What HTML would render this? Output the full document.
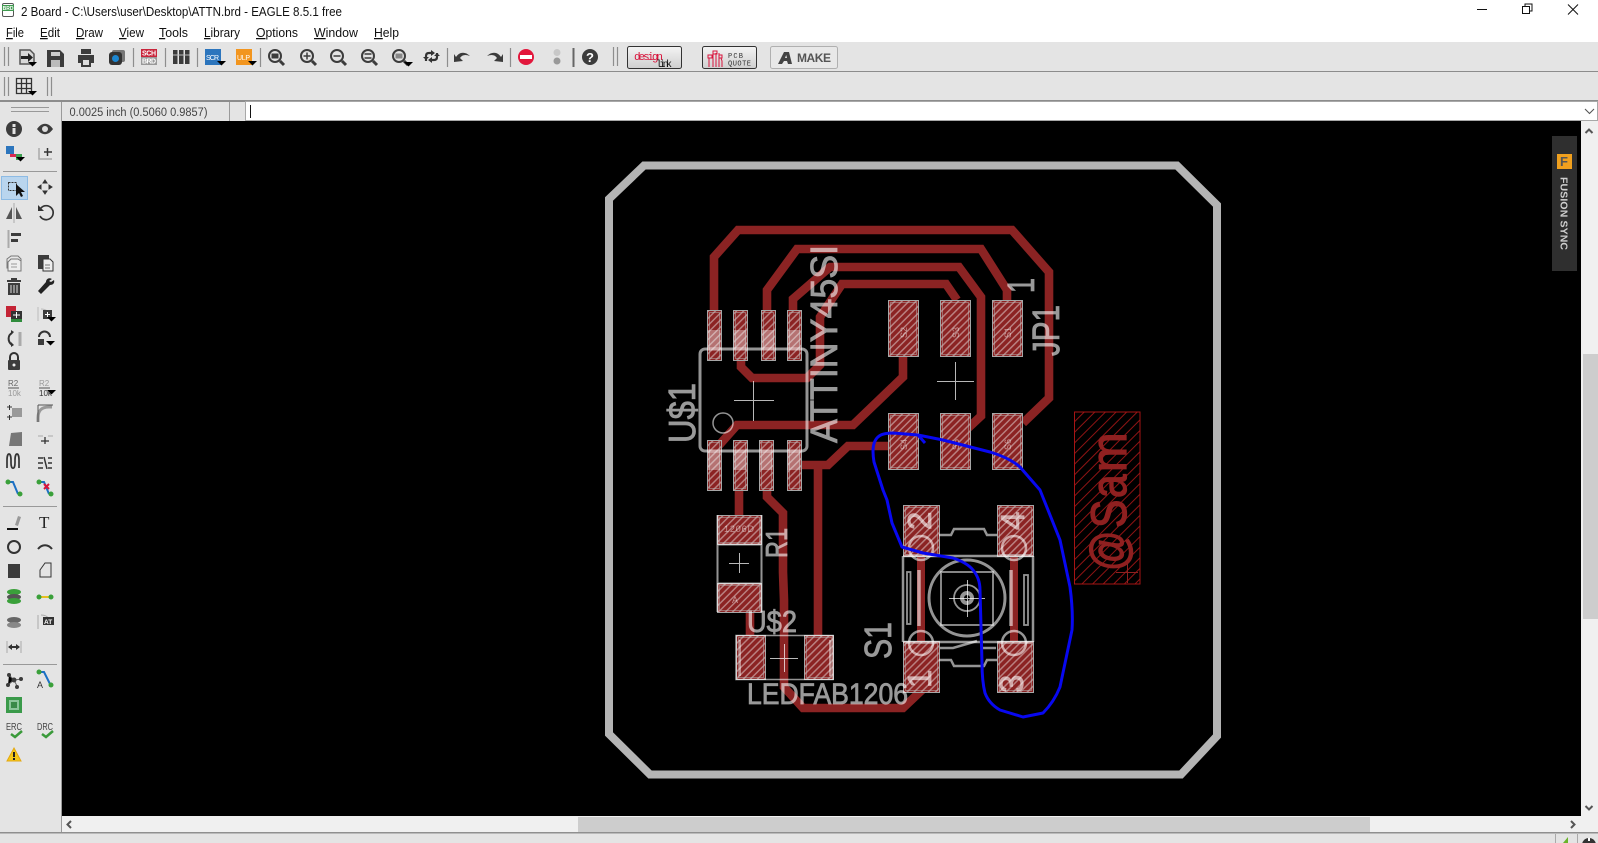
<!DOCTYPE html>
<html><head><meta charset="utf-8"><title>2 Board - EAGLE</title>
<style>
html,body{margin:0;padding:0;background:#e4e4e4;overflow:hidden}
svg{display:block;font-family:"Liberation Sans",sans-serif}
.m{font-size:12.5px;fill:#111}
.sk{fill:#fff;stroke:#fff;stroke-width:.8px;opacity:.6;font-size:38px}
.ic{fill:#3c3c3c}
.is{fill:none;stroke:#3c3c3c;stroke-width:2}
.sep{stroke:#8e8e8e;stroke-width:1.2}
</style></head><body>
<svg width="1598" height="843" viewBox="0 0 1598 843" xmlns="http://www.w3.org/2000/svg">
<defs>
<pattern id="h" width="5" height="5" patternUnits="userSpaceOnUse" patternTransform="rotate(45)"><rect width="5" height="5" fill="#8b2323"/><rect width="1.5" height="5" fill="#b98080"/></pattern>
<pattern id="hr" width="7.5" height="7.5" patternUnits="userSpaceOnUse" patternTransform="rotate(45)"><rect width="1" height="7.5" fill="#8f1414"/></pattern>
<g id="arr"><path d="M0 0h9l-4.500 4.500z" fill="#000"/></g>
<linearGradient id="g" x1="0" y1="0" x2="0" y2="1"><stop offset="0" stop-color="#f4f4f4"/><stop offset="1" stop-color="#cfcfcf"/></linearGradient>
</defs>

<!-- chrome -->
<rect width="1598" height="843" fill="#e4e4e4"/>
<rect width="1598" height="42" fill="#fff"/>
<rect y="71" width="1598" height="1" fill="#8c8c8c"/>
<rect y="100" width="1598" height="2" fill="#8c8c8c"/>

<!-- title -->
<g>
<rect x="2.500" y="3.500" width="11" height="13" rx="1.500" fill="#fff" stroke="#555"/>
<rect x="2" y="5" width="12" height="6" fill="#3f9c50"/>
<text x="2.600" y="10" font-size="5" fill="#fff" font-weight="bold">BRD</text>
</g>
<text x="21" y="16" font-size="12.500" fill="#111" textLength="321" lengthAdjust="spacingAndGlyphs">2 Board - C:\Users\user\Desktop\ATTN.brd - EAGLE 8.5.1 free</text>
<path d="M1477 9.500h10" stroke="#111" stroke-width="1"/>
<path d="M1522.500 6.500h7v7h-7zM1525 6.500v-2.500h7v7h-2.500" fill="none" stroke="#111"/>
<path d="M1568 4.500l10 10M1578 4.500l-10 10" stroke="#111" stroke-width="1"/>

<!-- menu -->
<text class="m" x="6" y="37" textLength="18" lengthAdjust="spacingAndGlyphs"><tspan text-decoration="underline">F</tspan>ile</text>
<text class="m" x="40" y="37" textLength="20" lengthAdjust="spacingAndGlyphs"><tspan text-decoration="underline">E</tspan>dit</text>
<text class="m" x="76" y="37" textLength="27" lengthAdjust="spacingAndGlyphs"><tspan text-decoration="underline">D</tspan>raw</text>
<text class="m" x="119" y="37" textLength="25" lengthAdjust="spacingAndGlyphs"><tspan text-decoration="underline">V</tspan>iew</text>
<text class="m" x="159" y="37" textLength="29" lengthAdjust="spacingAndGlyphs"><tspan text-decoration="underline">T</tspan>ools</text>
<text class="m" x="204" y="37" textLength="36" lengthAdjust="spacingAndGlyphs"><tspan text-decoration="underline">L</tspan>ibrary</text>
<text class="m" x="256" y="37" textLength="42" lengthAdjust="spacingAndGlyphs"><tspan text-decoration="underline">O</tspan>ptions</text>
<text class="m" x="314" y="37" textLength="44" lengthAdjust="spacingAndGlyphs"><tspan text-decoration="underline">W</tspan>indow</text>
<text class="m" x="374" y="37" textLength="25" lengthAdjust="spacingAndGlyphs"><tspan text-decoration="underline">H</tspan>elp</text>

<!-- toolbar 1 -->
<path class="sep" d="M4.500 47v19M8.500 47v19M133.500 48v19M165.500 48v19M197.500 48v19M260.500 48v19M447.500 48v19M510.500 48v19M613.500 47v19M617.500 47v19"/>
<path d="M573.500 48v19" stroke="#666" stroke-width="2"/>
<path d="M20 50h10l4 4v10h-14z" fill="#d8d8d8" stroke="#555" stroke-width="1.500"/><path d="M21 56h7v-3l5 4.500-5 4.500v-3h-7z" fill="#222"/><use href="#arr" x="28" y="62"/>
<path d="M47 50h13l4 4v13h-17z" class="ic"/><rect x="51" y="52" width="9" height="4" fill="#ccc"/><rect x="51" y="60" width="9" height="7" fill="#bbb"/>
<path d="M81 49h10v5h-10zM78 55h16v8h-3v4h-10v-4h-3z" class="ic"/><rect x="83" y="60" width="6" height="5" fill="#ddd"/>
<rect x="112" y="50" width="13" height="12" rx="2" fill="#777"/><rect x="109" y="52" width="13" height="13" rx="3" fill="#333"/><circle cx="115.500" cy="58.500" r="3.500" fill="#1c86d0"/>
<rect x="141" y="49" width="16" height="8" fill="#c8263c"/><rect x="141" y="57" width="16" height="8" fill="#999"/><text x="142" y="55.500" font-size="7" font-weight="bold" fill="#fff" textLength="14">SCH</text><text x="142" y="63.500" font-size="7" font-weight="bold" fill="#fff" textLength="14">BRD</text>
<rect x="173" y="50" width="4.500" height="14" class="ic"/><rect x="179" y="50" width="4.500" height="14" class="ic"/><rect x="185" y="50" width="4.500" height="14" class="ic"/><path d="M173 55h16.500" stroke="#bbb"/>
<rect x="205" y="49" width="16" height="16" fill="#2c75bd"/><text x="206" y="60" font-size="7" fill="#fff" textLength="13">SCR</text><use href="#arr" x="217" y="61"/>
<rect x="236" y="49" width="16" height="16" fill="#f2951e"/><text x="237" y="60" font-size="7" fill="#fff" textLength="13">ULP</text><use href="#arr" x="248" y="61"/>
<g class="is"><circle cx="275" cy="56" r="6"/><path d="M280 61l4 4" stroke-width="3"/><circle cx="307" cy="56" r="6"/><path d="M312 61l4 4" stroke-width="3"/><circle cx="337" cy="56" r="6"/><path d="M342 61l4 4" stroke-width="3"/><circle cx="368" cy="56" r="6"/><path d="M373 61l4 4" stroke-width="3"/><circle cx="399" cy="56" r="6"/><path d="M404 61l4 4" stroke-width="3"/></g>
<rect x="271.500" y="53.500" width="7" height="5" class="ic"/><path d="M303.500 56h7M307 52.500v7M333.500 56h7M364.500 54h7M364.500 58h7" stroke="#3c3c3c" stroke-width="1.500"/><rect x="395.500" y="53.500" width="7" height="5" fill="#888"/><use href="#arr" x="404" y="62"/>
<path d="M426 61v-5c0-2 1-3 3-3h3M437 53v4c0 2-1 3-3 3h-3" fill="none" stroke="#333" stroke-width="2.200"/><path d="M431 50v6l4-3zM432 57v6l-4-3zM423 57h6l-3 3zM434 56h6l-3-3z" fill="#333"/>
<path d="M456 57c3-5 9-6 14-1-5-2-8-1-10 2l3 3-9 1 0-8z" class="ic"/>
<path d="M501 57c-3-5-9-6-14-1 5-2 8-1 10 2l-3 3 9 1 0-8z" class="ic"/>
<circle cx="526" cy="57" r="8" fill="#e2173c"/><rect x="520" y="55" width="12" height="4" fill="#fff"/>
<circle cx="557" cy="52.500" r="3.500" fill="#c8c8c8"/><circle cx="557" cy="61" r="3.500" fill="#999"/>
<circle cx="590" cy="57" r="8" fill="#3c3c3c"/><text x="586" y="62" font-size="13" font-weight="bold" fill="#fff">?</text>

<!-- buttons -->
<rect x="627.500" y="46.500" width="54" height="22" rx="2" fill="url(#g)" stroke="#333"/>
<text x="634" y="60" font-size="11" fill="#d8143c" font-family="Liberation Mono" textLength="29">design</text>
<text x="656" y="67" font-size="10" fill="#111" font-family="Liberation Mono" textLength="16">link</text>
<rect x="702.500" y="46.500" width="54" height="22" rx="2" fill="url(#g)" stroke="#333"/>
<path d="M709 67v-9M713 67v-14M716 67v-14M719 67v-14M722 67v-6l-1-3M708 55h4v3h-4zM713 51h4v3h-4zM719 55h3v3h-3z" fill="none" stroke="#d8143c"/>
<text x="728" y="58" font-size="7" fill="#333" font-family="Liberation Mono" textLength="15">PCB</text>
<text x="728" y="65.500" font-size="7" fill="#333" font-family="Liberation Mono" textLength="23">QUOTE</text>
<rect x="770.500" y="46.500" width="67" height="22" rx="2" fill="#e8e8e8" stroke="#b0b0b0"/>
<path d="M778 64l6-12h5l3 12h-4l-1-3h-3l-2 3zM785 58h2l-.8-3z" fill="#444"/>
<text x="797" y="62" font-size="12" font-weight="bold" fill="#555" textLength="34">MAKE</text>

<!-- toolbar 2 -->
<path class="sep" d="M4.500 77v19M8.500 77v19M47.500 77v19M51.500 77v19"/>
<path d="M16.500 78.500h15v15h-15zM16.500 83.500h15M16.500 88.500h15M21.500 78.500v15M26.500 78.500v15" fill="none" stroke="#333" stroke-width="1.300"/><use href="#arr" x="28" y="91"/>

<!-- coord row -->
<rect x="0" y="102" width="62" height="19" fill="#e4e4e4"/>
<path d="M61.500 102v19M229.500 102v19" stroke="#9a9a9a"/>
<text x="69.500" y="116" font-size="11.500" fill="#444" textLength="138" lengthAdjust="spacingAndGlyphs">0.0025 inch (0.5060 0.9857)</text>
<rect x="245.500" y="101.500" width="1352" height="19" fill="#fff" stroke="#a8a8a8"/>
<path d="M250.500 105v13" stroke="#111"/>
<path d="M1585 109l4.500 4.500 4.500-4.500" fill="none" stroke="#555" stroke-width="1.100"/>

<!-- canvas -->
<rect x="62" y="121" width="1519" height="695" fill="#000"/>
<rect x="61" y="102" width="1" height="731" fill="#9a9a9a"/>
<!-- v scroll -->
<rect x="1581" y="121" width="17" height="712" fill="#f0f0f0"/>
<rect x="1583" y="354" width="15" height="265" fill="#cdcdcd"/>
<path d="M1585.500 133l3.500-3.500 3.500 3.500" fill="none" stroke="#555" stroke-width="2"/>
<path d="M1585.500 806l3.500 3.500 3.500-3.500" fill="none" stroke="#555" stroke-width="2"/>
<!-- h scroll -->
<rect x="62" y="816" width="1519" height="16" fill="#f0f0f0"/>
<rect x="578" y="817" width="792" height="15" fill="#cdcdcd"/>
<path d="M71 821l-3.500 3.500 3.500 3.500" fill="none" stroke="#555" stroke-width="2"/>
<path d="M1571 821l3.500 3.500-3.500 3.500" fill="none" stroke="#555" stroke-width="2"/>
<rect y="832" width="1598" height="1.500" fill="#8f8f8f"/>
<!-- status -->
<text x="8" y="852" font-size="12" fill="#222" textLength="470" lengthAdjust="spacing">Left-click &amp; drag to define group (followed by Ctrl+right-click to move group)</text>
<path d="M1555.500 834v9M1577.500 834v9" stroke="#aaa"/>
<path d="M1563 843l5-6v6z" fill="#6ab42a"/><circle cx="1589" cy="845" r="7" fill="#333"/><rect x="1588" y="838" width="2" height="3" fill="#fff"/>

<!-- Fusion Sync -->
<rect x="1552" y="136" width="25" height="135" fill="#2f2f2f"/>
<rect x="1557" y="154" width="15" height="15" fill="#f0a01e"/>
<text x="1560" y="166" font-size="13" font-weight="bold" fill="#555">F</text>
<text transform="translate(1560.500,177) rotate(90)" font-size="10.500" font-weight="bold" fill="#cfcfcf" textLength="73">FUSION SYNC</text>

<!-- PCB -->
<path d="M644 165.500H1177L1217 205V736L1181 774.500H650L609 734V199Z" fill="none" stroke="#b4b4b4" stroke-width="8"/>

<g fill="none" stroke="#8b2323" stroke-width="8.600">
<path d="M714 320V257L738 230H1012L1049 272V398L1023 423"/>
<path d="M767 320V290L797 249H981L1007 290V305"/>
<path d="M793 320V299L830 267H959L981 297V416L965 431"/>
<path d="M741 350V367L752 378H807L820 365V317L842 284H946L957 300"/>
<path d="M713 452L737 425H853L903 377V350"/>
<path d="M795 465H828L848 446H895"/>
<path d="M818 465V640"/>
<path d="M739 485V520"/>
<path d="M767 485V497L783 513V572L784 600V687L803 708H903L922 690"/>
<path d="M750 605V640"/>
<path d="M921 550V645M1014 550V645" stroke-width="8"/>
</g>

<!-- pads -->
<g fill="url(#h)" stroke="#a6a6a6" stroke-width="1">
<rect x="707.500" y="310.500" width="14" height="50"/><rect x="733.500" y="310.500" width="14" height="50"/><rect x="761.500" y="310.500" width="14" height="50"/><rect x="787.500" y="310.500" width="14" height="50"/>
<rect x="707.500" y="440.500" width="14" height="50"/><rect x="733.500" y="440.500" width="14" height="50"/><rect x="759.500" y="440.500" width="14" height="50"/><rect x="787.500" y="440.500" width="14" height="50"/>
<rect x="888.500" y="300.500" width="30" height="56"/><rect x="940.500" y="300.500" width="30" height="56"/><rect x="992.500" y="300.500" width="30" height="56"/>
<rect x="888.500" y="413.500" width="30" height="56"/><rect x="940.500" y="413.500" width="30" height="56"/><rect x="992.500" y="413.500" width="30" height="56"/>
<rect x="717.500" y="515.500" width="44" height="29"/><rect x="717.500" y="583.500" width="44" height="29"/>
<rect x="736.500" y="635.500" width="29" height="44"/><rect x="804.500" y="635.500" width="29" height="44"/>
<rect x="903.500" y="505.500" width="36" height="51"/><rect x="997.500" y="505.500" width="36" height="51"/>
<rect x="903.500" y="641.500" width="36" height="51"/><rect x="997.500" y="641.500" width="36" height="51"/>
</g>
<g fill="none" stroke="#b5b5b5" stroke-width="1" opacity=".5">
<rect x="709.500" y="312.500" width="10" height="46"/><rect x="735.500" y="312.500" width="10" height="46"/><rect x="763.500" y="312.500" width="10" height="46"/><rect x="789.500" y="312.500" width="10" height="46"/>
<rect x="709.500" y="442.500" width="10" height="46"/><rect x="735.500" y="442.500" width="10" height="46"/><rect x="761.500" y="442.500" width="10" height="46"/><rect x="789.500" y="442.500" width="10" height="46"/>
<rect x="890.500" y="302.500" width="26" height="52"/><rect x="942.500" y="302.500" width="26" height="52"/><rect x="994.500" y="302.500" width="26" height="52"/>
<rect x="890.500" y="415.500" width="26" height="52"/><rect x="942.500" y="415.500" width="26" height="52"/><rect x="994.500" y="415.500" width="26" height="52"/>
<rect x="719.500" y="517.500" width="40" height="25"/><rect x="719.500" y="585.500" width="40" height="25"/>
<rect x="738.500" y="637.500" width="25" height="40"/><rect x="806.500" y="637.500" width="25" height="40"/>
<rect x="905.500" y="507.500" width="32" height="47"/><rect x="999.500" y="507.500" width="32" height="47"/>
<rect x="905.500" y="643.500" width="32" height="47"/><rect x="999.500" y="643.500" width="32" height="47"/>
</g>

<!-- silk -->
<g fill="none" stroke="rgba(255,255,255,.58)">
<rect x="700" y="349" width="107" height="102" rx="5" stroke-width="3"/>
<circle cx="723" cy="423" r="10" stroke-width="1.500"/>
<path d="M714 330v18M740 330v18M768 330v18M794 330v18M714 452v18M740 452v18M766 452v18M794 452v18" stroke-width="13" stroke="rgba(255,255,255,.36)"/>
<path d="M717.500 544.500h44v39h-44zM717.500 515v97M761.500 515v97" stroke-width="2"/>
<path d="M736 635.500h97v44h-97zM740 640v36M830 640v36" stroke-width="1.600"/>
<path d="M903 556v86M1033 556v86M903 556h130M903 642h130" stroke-width="2.500"/>
<path d="M939 535h12l3-6h30l3 6h10M939 660h12l3 6h30l3-6h10" stroke-width="2.500"/>
<path d="M940 648h13l24-7M982 648h14" stroke-width="2.500"/>
<circle cx="967" cy="598" r="38" stroke-width="3"/>
<rect x="941" y="572" width="52" height="53" stroke-width="1.800"/>
<circle cx="967" cy="598" r="13" stroke-width="1.800"/>
<circle cx="967" cy="598" r="5" stroke-width="4"/>
<rect x="907" y="572" width="3.500" height="52" stroke-width="1.800"/>
<rect x="1024" y="575" width="4" height="50" stroke-width="1.800"/>
<path d="M919 570v56M1011 570v56" stroke-width="3.500"/>
<circle cx="921" cy="548" r="12" stroke-width="2.500"/><circle cx="1014" cy="548" r="12" stroke-width="2.500"/>
<circle cx="921" cy="643" r="12" stroke-width="2.500"/><circle cx="1014" cy="643" r="12" stroke-width="2.500"/>
</g>
<g stroke="rgba(255,255,255,.72)" stroke-width="1" fill="none">
<path d="M734 400.500h40M753.500 381v40M937 381.500h37M955.500 362v38M729 563.500h20M739.500 553v20M770 658.500h28M784.500 644v28M949 598.500h36M967.500 580v37"/>
</g>

<!-- labels -->
<text class="sk" transform="translate(837,443) rotate(-90)" textLength="198" lengthAdjust="spacingAndGlyphs">ATTINY45SI</text>
<text class="sk" transform="translate(695,443) rotate(-90)" textLength="60" lengthAdjust="spacingAndGlyphs">U$1</text>
<text class="sk" transform="translate(1059,356) rotate(-90)" textLength="51" lengthAdjust="spacingAndGlyphs">JP1</text>
<text class="sk" transform="translate(1034,293) rotate(-90)" textLength="15" lengthAdjust="spacingAndGlyphs">1</text>
<text class="sk" style="font-size:31px" transform="translate(787,558) rotate(-90)" textLength="30" lengthAdjust="spacingAndGlyphs">R1</text>
<text class="sk" transform="translate(891,659) rotate(-90)" textLength="37" lengthAdjust="spacingAndGlyphs">S1</text>
<text class="sk" style="font-size:31px" x="747" y="632" textLength="50" lengthAdjust="spacingAndGlyphs">U$2</text>
<text class="sk" style="font-size:30px" x="747" y="704" textLength="161" lengthAdjust="spacingAndGlyphs">LEDFAB1206</text>
<text class="sk" style="font-size:33px" transform="translate(931,530) rotate(-90)">2</text>
<text class="sk" style="font-size:33px" transform="translate(1024,530) rotate(-90)">4</text>
<text class="sk" style="font-size:33px" transform="translate(931,688) rotate(-90)">1</text>
<text class="sk" style="font-size:33px" transform="translate(1023,693) rotate(-90)">3</text>
<g font-size="9" fill="rgba(255,255,255,.5)">
<text transform="translate(907,338) rotate(-90)">S2</text><text transform="translate(959,338) rotate(-90)">S3</text><text transform="translate(1011,338) rotate(-90)">S1</text>
<text transform="translate(907,450) rotate(-90)">S4</text><text transform="translate(959,450) rotate(-90)">S5</text><text transform="translate(1011,450) rotate(-90)">S6</text>
<text x="724" y="532" textLength="30">1206D</text><text x="732" y="603">A</text>
</g>

<!-- @Sam -->
<rect x="1074.500" y="412" width="65.500" height="172" fill="url(#hr)" stroke="#a51414" stroke-width="1"/>
<g font-size="50" fill="#8f2020" stroke="#8f2020" stroke-width="1.300">
<text transform="translate(1126,571) rotate(-90) scale(.8,1)">@</text>
<text transform="translate(1126,528) rotate(-90) scale(.85,1)">S</text>
<text transform="translate(1126,498) rotate(-90) scale(.85,1)">a</text>
<text transform="translate(1126,472) rotate(-90) scale(.95,1)">m</text>
</g>
<path d="M1116 572.500h22M1127.500 562v21" stroke="#8f2020" stroke-width="1"/>

<!-- blue scribble -->
<path d="M925 443L918 435L893 433C883 433 878 435 875 441C872 447 873 456 874 462L883 490L887 500L892 523L902 547L923 553L953 558C962 561 969 565 973 570C978 576 980 583 980 590L982 663C982 675 983 685 985 693C988 701 993 706 1000 710L1023 717L1043 713C1050 706 1056 697 1060 687L1072 630C1073 615 1072 602 1070 587L1060 540L1040 490L1020 467C1012 460 1000 455 990 452L943 440L918 435" fill="none" stroke="#0808f0" stroke-width="3" stroke-linejoin="round"/>

<!-- sidebar -->
<path d="M11 107.500h38M11 111.500h38" stroke="#999"/>
<path d="M3 171.500h54M3 506.500h54M3 664.500h54" stroke="#999"/>
<rect x="1.500" y="176.500" width="26" height="23" fill="#b9d5ee" stroke="#8dbbe4"/>

<circle cx="14" cy="129" r="8" class="ic"/><rect x="12.500" y="124" width="3" height="3" fill="#e4e4e4"/><rect x="12.500" y="128" width="3" height="6" fill="#e4e4e4"/>
<path d="M37 129c5-7 11-7 16 0-5 7-11 7-16 0z" class="ic"/><circle cx="45" cy="129" r="3" fill="#ddd"/>
<rect x="6" y="146" width="8" height="8" fill="#2c75bd"/><rect x="10" y="154" width="8" height="3" fill="#d82a50"/><rect x="16" y="154" width="6" height="6" fill="#3ca050"/><use href="#arr" x="16" y="157"/>
<path d="M39 148v11h13" stroke="#aaa" stroke-width="1.500" fill="none"/><path d="M44 152h8M47.500 148v8" stroke="#333" stroke-width="1.500"/>
<rect x="8.500" y="182.500" width="8" height="8" fill="none" stroke="#333" stroke-dasharray="2 1"/><path d="M16 184l0 12 3-3 2 4 2-1-2-4 4 0z" fill="#111"/>
<path d="M45 180l2 3h-4zM45 194l2-3h-4zM38 187l3-2v4zM52 187l-3-2v4z" stroke="#333" fill="#333"/>
<path d="M12 207v12l-6 0zM16 207v12l6 0z" fill="#555"/><path d="M14 203v20" stroke="#aaa"/>
<path d="M41 208a7 7 0 1 1-1 8" fill="none" stroke="#333" stroke-width="1.700"/><path d="M38 205v6h6z" fill="#333"/>
<path d="M8.500 230v18" stroke="#aaa" stroke-width="2"/><rect x="11" y="233" width="10" height="3" class="ic"/><rect x="11" y="239" width="7" height="3" class="ic"/>
<path d="M11 256h7l3 3v9h-14v-9z" fill="#e8e8e8" stroke="#777"/><path d="M11 259h7l3 2v10h-13v-9z" fill="#eee" stroke="#777"/><path d="M11 264h6M11 267h6" stroke="#999"/>
<rect x="38" y="255" width="11" height="14" class="ic"/><path d="M43 259h7l3 3v9h-10z" fill="#eee" stroke="#333"/><path d="M45 265h5M45 268h5" stroke="#777"/>
<path d="M7 280h14v2h-14zM8 283h12v12h-12z" class="ic"/><rect x="11" y="278" width="6" height="2" class="ic"/><path d="M11 285v8M14 285v8M17 285v8" stroke="#ddd"/>
<path d="M52 279c-3-2-6 0-6 3l-8 9 3 3 9-9c3 0 5-2 4-5l-3 2-2-1z" fill="#222"/>
<rect x="6" y="306" width="10" height="11" fill="#c42436"/><rect x="11" y="311" width="11" height="8" fill="#333"/><rect x="11" y="319" width="11" height="3" fill="#2f8c3c"/><path d="M13 315h7M16.500 312v6" stroke="#fff"/>
<path d="M38 307v14M41 309c6 0 9 4 9 6" stroke="#bbb" fill="none"/><rect x="43" y="310" width="9" height="9" class="ic"/><path d="M45 314.500h5M47.500 312v5" stroke="#fff"/><use href="#arr" x="47" y="317"/>
<path d="M20 332v14" stroke="#aaa" stroke-width="3"/><path d="M12 333c-4 2-5 8 0 12" fill="none" stroke="#333" stroke-width="2"/><path d="M11 330v5l3-3zM11 347v-5l3 3z" fill="#333"/>
<path d="M39 337a5 5 0 0 1 11 0" fill="none" stroke="#333" stroke-width="2"/><rect x="38" y="339" width="6" height="6" class="ic"/><use href="#arr" x="46" y="341"/>
<rect x="8" y="360" width="12" height="10" rx="1" class="ic"/><path d="M10 360v-3a4 4 0 0 1 8 0v3" fill="none" stroke="#333" stroke-width="2"/><circle cx="14" cy="365" r="1.500" fill="#eee"/>
<text x="8" y="386" font-size="8" fill="#666">R2</text><path d="M8 388h11" stroke="#555"/><text x="8" y="396" font-size="8" fill="#999">10k</text>
<text x="39" y="386" font-size="8" fill="#999">R2</text><path d="M39 388h11" stroke="#555"/><text x="39" y="396" font-size="8" fill="#333">10k</text><use href="#arr" x="47" y="390"/>
<rect x="12" y="408" width="10" height="9" fill="#999"/><path d="M7 407h5M9.500 405v5M7 417h5M9.500 415v5" stroke="#333"/>
<path d="M38 422v-4c0-7 3-11 11-11h3" fill="none" stroke="#999" stroke-width="3"/><path d="M38 405v17M38 405h15" stroke="#555" fill="none"/>
<path d="M9 446l2-13 11-1v14z" fill="#777"/>
<path d="M38 436h5M48 436h5" stroke="#aaa"/><path d="M41 441h8M45 437v7" stroke="#333" stroke-width="1.300"/>
<path d="M7 470v-8c0-8 4-8 4 0v3c0 7 4 7 4 0v-3c0-8 4-8 4 0v8" fill="none" stroke="#333" stroke-width="1.700" transform="translate(0 -2)"/>
<path d="M38 458h5M38 463h5M38 468h5M52 458h-4M52 463h-4M52 468h-4M44 457l3 12" stroke="#333" stroke-width="1.500"/>
<path d="M8 482h5l5 12" fill="none" stroke="#1c70c4" stroke-width="2"/><circle cx="8" cy="482" r="2.500" fill="#3aa03a"/><circle cx="20" cy="494" r="2.500" fill="#3aa03a"/>
<path d="M39 482h5l5 12" fill="none" stroke="#1c70c4" stroke-width="2"/><circle cx="39" cy="482" r="2.500" fill="#3aa03a"/><circle cx="51" cy="494" r="2.500" fill="#3aa03a"/><path d="M44 484l5 5M49 484l-5 5" stroke="#d8143c" stroke-width="2"/>
<path d="M7 529h11" stroke="#111" stroke-width="2"/><path d="M15 525l3-9 3 1-3 9z" fill="#999"/>
<text x="39" y="528" font-size="17" font-family="Liberation Serif" fill="#222">T</text>
<circle cx="14" cy="547" r="6" fill="none" stroke="#333" stroke-width="2"/>
<path d="M38 549c4-5 10-5 14 0" fill="none" stroke="#333" stroke-width="2"/>
<rect x="8" y="564" width="12" height="14" class="ic"/>
<path d="M40 577v-7l5-7h6v14z" fill="none" stroke="#333" stroke-width="1"/>
<g><ellipse cx="14" cy="592" rx="7" ry="3" fill="#3aa03a"/><ellipse cx="14" cy="597" rx="7" ry="3" fill="#555"/><ellipse cx="14" cy="601" rx="7" ry="3" fill="#3aa03a"/></g>
<path d="M39 597h12" stroke="#e6c020" stroke-width="2"/><circle cx="39" cy="597" r="2.500" fill="#3aa03a"/><circle cx="51" cy="597" r="2.500" fill="#3aa03a"/>
<ellipse cx="14" cy="620" rx="7" ry="3" fill="#666"/><ellipse cx="14" cy="625" rx="7" ry="3" fill="#888"/>
<path d="M38 615v14M41 615c5 0 7 2 8 4" stroke="#aaa" fill="none"/><rect x="43" y="617" width="11" height="8" fill="#333"/><text x="44" y="624" font-size="6.500" font-weight="bold" fill="#fff">AT</text>
<path d="M7 641v12M21 641v12" stroke="#aaa"/><path d="M9 647h10" stroke="#333" stroke-width="2"/><path d="M8 647l4-3v6zM20 647l-4-3v6z" fill="#333"/>
<path d="M9 675l5 5-6 5M14 680l8-1M14 680l3 6" stroke="#666"/><circle cx="9" cy="675" r="2" class="ic"/><circle cx="14" cy="680" r="2.500" class="ic"/><circle cx="8" cy="685" r="2" class="ic"/><circle cx="21" cy="679" r="2" class="ic"/><circle cx="17" cy="687" r="2" class="ic"/>
<path d="M39 672h5l6 12" fill="none" stroke="#1c70c4" stroke-width="2"/><circle cx="39" cy="672" r="2.500" fill="#3aa03a"/><circle cx="51" cy="685" r="2.500" fill="#3aa03a"/><text x="37" y="688" font-size="9" fill="#333">A</text>
<rect x="6" y="697" width="16" height="16" fill="#3a9a4a"/><rect x="9" y="700" width="10" height="10" fill="#8cc69a"/><rect x="11" y="702" width="6" height="6" fill="#3a8a48"/>
<text x="6" y="730" font-size="10" fill="#444" textLength="16" lengthAdjust="spacingAndGlyphs">ERC</text><path d="M11 734l4 3 7-6" fill="none" stroke="#3a9a3a" stroke-width="2.500"/>
<text x="37" y="730" font-size="10" fill="#444" textLength="16" lengthAdjust="spacingAndGlyphs">DRC</text><path d="M42 734l4 3 7-6" fill="none" stroke="#3a9a3a" stroke-width="2.500"/>
<path d="M14 748l7 13h-14z" fill="#f4c81a" stroke="#e4a810"/><rect x="13" y="752" width="2" height="5" fill="#222"/><rect x="13" y="758" width="2" height="2" fill="#222"/>
</svg>
</body></html>
